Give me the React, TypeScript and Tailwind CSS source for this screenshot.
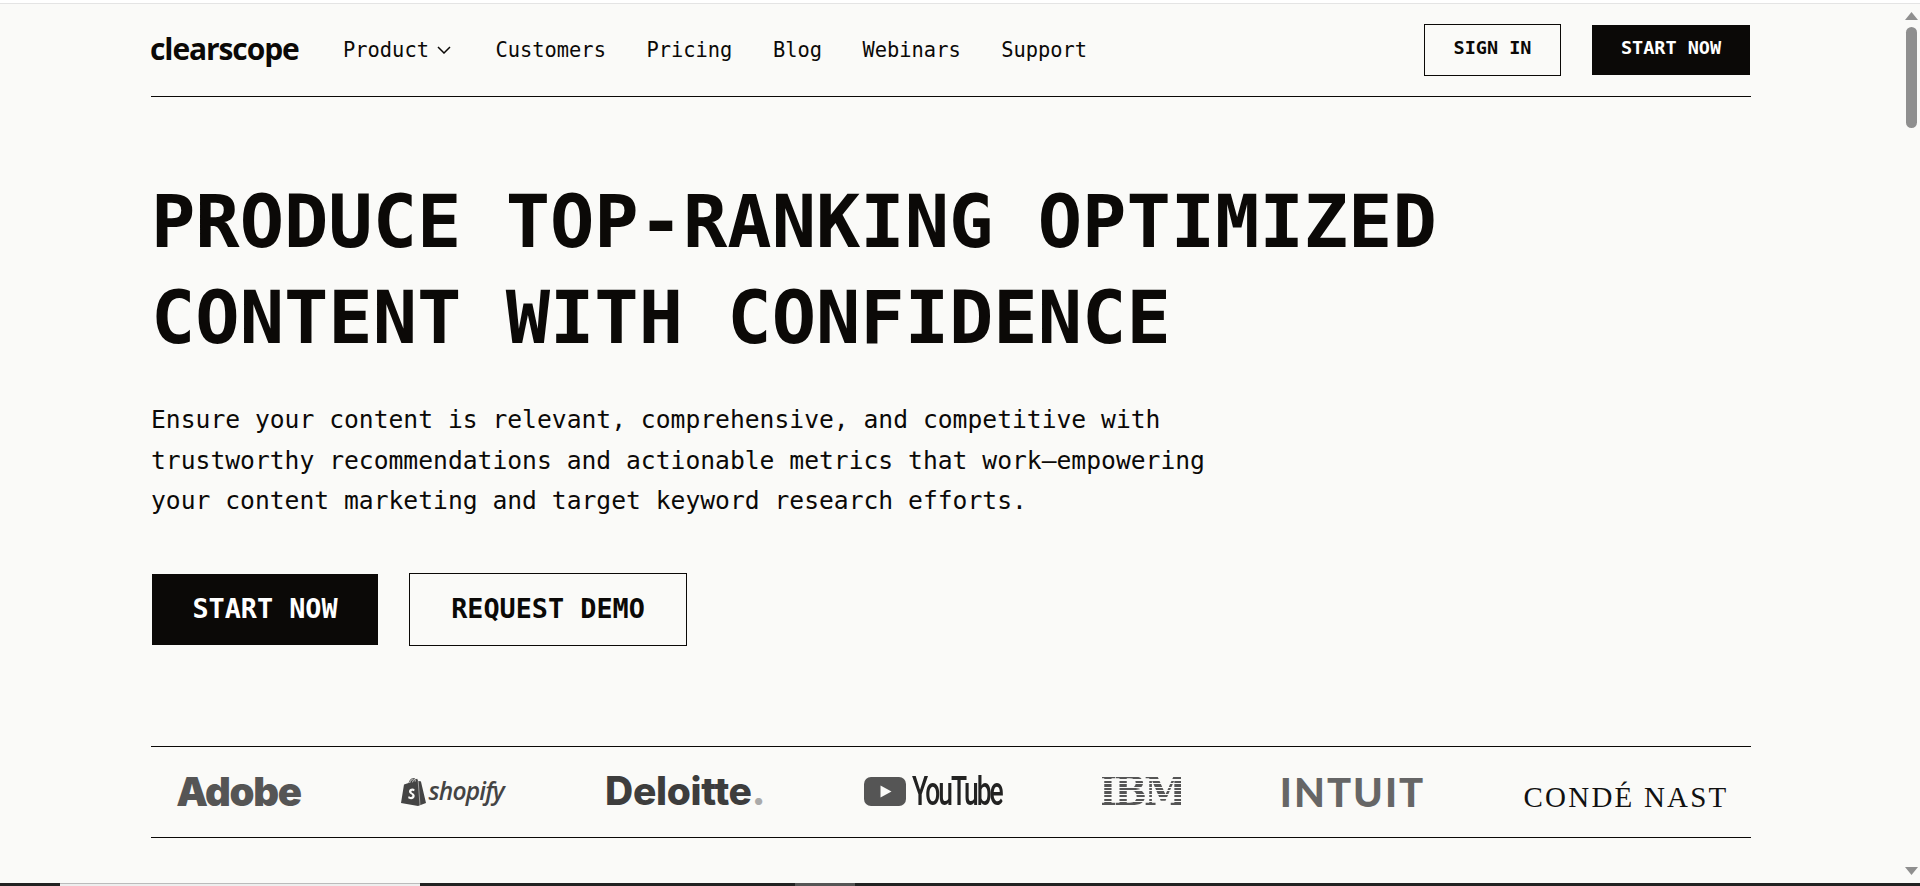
const navLinks = ["Customers", "Pricing", "Blog", "Webinars", "Support"];

function ShopifyBag() {
  return (
    <svg viewBox="0 0 25 28" className="h-[28px] w-[25px] shrink-0">
      <path d="M3 6.5 7.5 5C8.5 1.5 10.5 0 12.5 0c1 0 1.6.5 2 1.2l1.7-.4.9 2.2 2.4.3c.3 0 .5.2.5.5L25 25l-8 3L0 25 3 6.5Z" fill="#444" />
      <path d="M8.6 5C9.4 2.5 10.8 1 12.4 1M11.5 4.3c.5-1.6 1.2-2.7 2.2-3.3M14.2 3.5c0-1 0-1.6-.3-2.2" stroke="#fafaf8" strokeWidth="0.8" fill="none" />
      <path d="M17.2 3 19 27.5" stroke="#fafaf8" strokeWidth="0.5" />
      <path d="M13.6 11.2c-.6-.4-1.4-.6-2.2-.6-2 0-3.4 1.2-3.4 3 0 2.4 3.4 2.6 3.4 4.2 0 .7-.6 1.1-1.3 1.1-1 0-1.9-.6-2.3-1l-.7 2.2c.6.6 1.7 1.1 2.9 1.1 2.2 0 3.7-1.3 3.7-3.4 0-2.6-3.3-2.8-3.3-4.1 0-.5.4-.9 1.2-.9.6 0 1.2.2 1.5.4l.5-2Z" fill="#fafaf8" />
    </svg>
  );
}

function YoutubeMark() {
  return (
    <svg viewBox="0 0 42 29" className="h-[29px] w-[42px] shrink-0">
      <rect width="42" height="29" rx="7" fill="#555" />
      <path d="M16.5 8.5 27.5 14.5 16.5 20.5Z" fill="#fafaf8" />
    </svg>
  );
}

function LogoStrip() {
  return (
    <div className="mt-[100px] flex h-[92px] items-center gap-[100.5px] border-y border-[#0b0907] pl-[26px]">
      <div className="flex h-[29px] w-[123px] items-center justify-center text-[40px] font-black tracking-[-1.3px] text-[#555] font-['Inter',sans-serif]">
        Adobe
      </div>
      <div className="flex h-[29px] w-[104px] items-center gap-[3px]">
        <ShopifyBag />
        <span className="text-[24.5px] font-semibold italic tracking-[-0.8px] text-[#444] font-['Open_Sans',sans-serif]">
          shopify
        </span>
      </div>
      <div className="flex h-[29px] w-[158px] items-center whitespace-nowrap text-[39px] font-extrabold tracking-[-0.3px] text-[#3d3d3d] font-['Inter',sans-serif]">
        Deloitte<span className="text-[#aaa]">.</span>
      </div>
      <div className="flex h-[29px] w-[138px] items-center gap-[6px]">
        <YoutubeMark />
        <span className="origin-left scale-x-[0.66] text-[40px] font-medium tracking-[-3px] text-[#222] font-['Roboto',sans-serif]">
          YouTube
        </span>
      </div>
      <div className="flex h-[29px] w-[79px] items-center justify-center bg-[repeating-linear-gradient(180deg,#555_0px,#555_2.4px,transparent_2.4px,transparent_3.6px)] bg-clip-text text-[39px] font-bold tracking-[-3px] text-transparent font-['DejaVu_Serif',serif]">
        IBM
      </div>
      <div className="flex h-[29px] w-[142px] items-center justify-center text-[40px] font-black tracking-[2px] text-[#666] font-['Lato',sans-serif]">
        INTUIT
      </div>
      <div className="flex h-[29px] w-[204px] items-end justify-center whitespace-nowrap text-[29px] leading-[17px] tracking-[2.2px] text-[#111] font-['Liberation_Serif',serif]">
        CONDÉ NAST
      </div>
    </div>
  );
}

function FakeScrollbar() {
  return (
    <aside className="flex w-[17px] shrink-0 flex-col items-center pb-[8px] pt-[8px]">
      <svg viewBox="0 0 13 8" className="h-[8px] w-[13px]">
        <path d="M6.5 0 13 8H0Z" fill="#8f8f8f" />
      </svg>
      <div className="mt-[7px] h-[101px] w-[11px] rounded-full bg-[#8f8f8f]" />
      <svg viewBox="0 0 13 8" className="mt-auto h-[8px] w-[13px]">
        <path d="M0 0H13L6.5 8Z" fill="#8f8f8f" />
      </svg>
    </aside>
  );
}

export default function App() {
  return (
    <div className="flex h-[886px] flex-col overflow-hidden bg-[#fafaf8] text-[#0b0907] font-['DejaVu_Sans_Mono',monospace]">
      <div className="h-[4px] shrink-0 border-b border-[#e4e4e4] bg-white" />

      <div className="flex min-h-0 flex-1">
        <div className="min-w-0 flex-1 pl-[151px] pr-[152px]">
          <header className="flex h-[93px] items-center border-b border-[#0b0907]">
            <a className="-ml-[1px] w-[193px] pb-[4px] text-[30px] font-bold tracking-[-1.1px] font-['Open_Sans',sans-serif]">clearscope</a>
            <nav className="flex items-center gap-[40.5px] text-[20.4px]">
              <span className="mr-[4px] flex items-center gap-[8px]">
                Product
                <svg viewBox="0 0 14 8" className="h-[8px] w-[14px]">
                  <path d="M1 1 7 7 13 1" stroke="#0b0907" strokeWidth="1.5" fill="none" />
                </svg>
              </span>
              {navLinks.map((link) => (
                <a key={link}>{link}</a>
              ))}
            </nav>
            <div className="ml-auto flex items-center gap-[30px] text-[18.5px] font-bold">
              <button className="h-[52px] w-[137px] border border-[#0b0907] pb-[4px]">SIGN IN</button>
              <button className="h-[52px] w-[160px] border border-transparent bg-[#0b0907] bg-clip-padding pb-[4px] text-white">START NOW</button>
            </div>
          </header>

          <h1 className="mt-[77px] text-[73.65px] font-bold leading-[96px]">
            PRODUCE TOP-RANKING OPTIMIZED
            <br />
            CONTENT WITH CONFIDENCE
          </h1>

          <p className="mt-[34px] text-[24.66px] leading-[40.5px]">
            Ensure your content is relevant, comprehensive, and competitive with
            <br />
            trustworthy recommendations and actionable metrics that work—empowering
            <br />
            your content marketing and target keyword research efforts.
          </p>

          <div className="mt-[51px] flex gap-[30px] text-[26.8px] font-bold">
            <button className="h-[73px] w-[228px] border border-transparent bg-[#0b0907] bg-clip-padding text-white">START NOW</button>
            <button className="h-[73px] w-[278px] border border-[#0b0907]">REQUEST DEMO</button>
          </div>

          <LogoStrip />
        </div>
        <FakeScrollbar />
      </div>

      <div className="flex h-[3px] shrink-0 bg-[#222]">
        <div className="ml-[60px] w-[360px] border-t border-[#bbb] bg-[#eee]" />
        <div className="ml-[375px] w-[60px] bg-[#555]" />
      </div>
    </div>
  );
}
